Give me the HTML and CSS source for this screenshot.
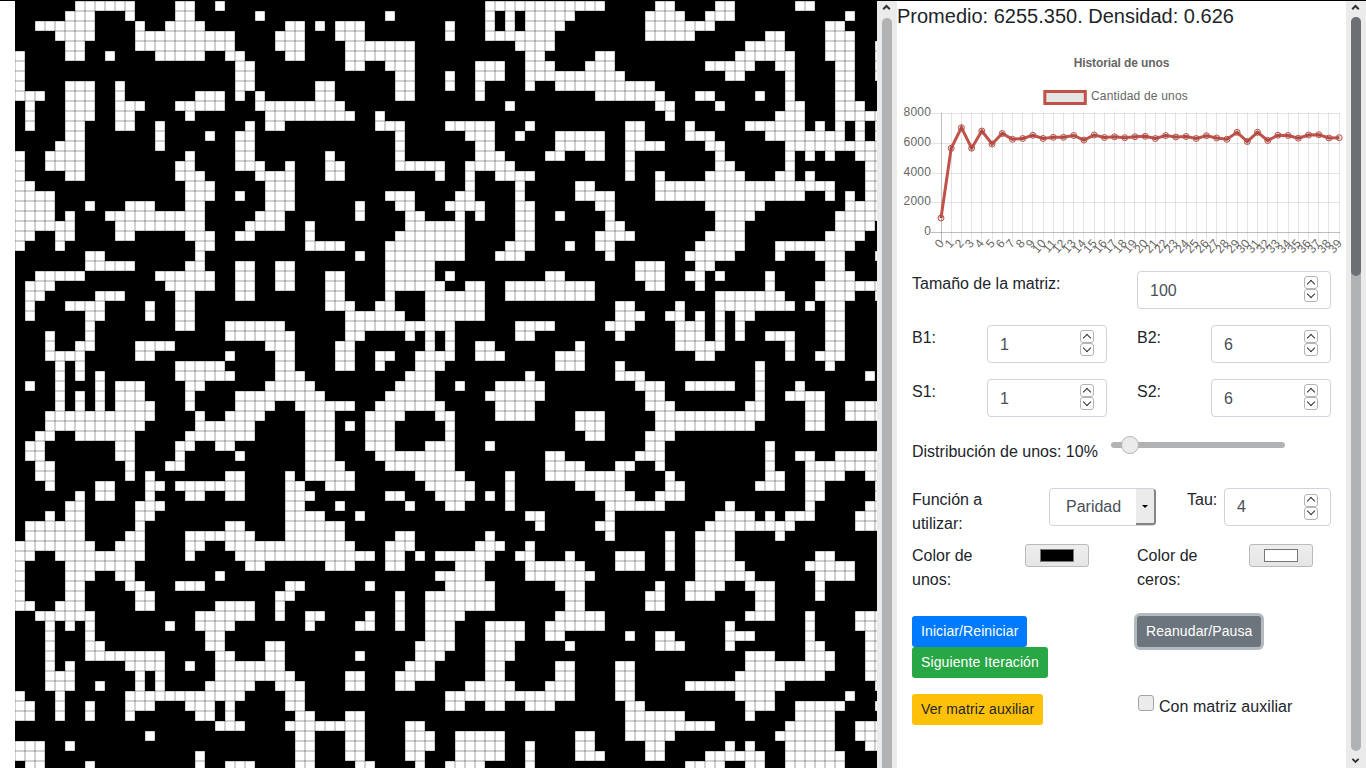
FILE: index.html
```html
<!DOCTYPE html>
<html lang="es">
<head>
<meta charset="utf-8">
<title>Autómata celular</title>
<link rel="stylesheet" href="styles.css">
</head>
<body>
<main class="app">
  <canvas class="matrix" id="matrix" width="862" height="767"></canvas>
  <div class="scroll scroll-left">
    <svg class="scroll-arrow" width="20" height="16" viewBox="0 0 20 16"><path d="M6.2 8.3 9.5 5l3.3 3.3"/></svg>
    <div class="scroll-track"></div>
  </div>
  <section class="panel">
    <h1 class="summary">Promedio: 6255.350. Densidad: 0.626</h1>
    <svg class="chart" id="chart" width="449" height="243" viewBox="897 28 449 243"></svg>
    <form class="controls">
      <div class="row low">
        <label class="half">Tamaño de la matriz:</label>
        <div class="number wide">100<span class="spin"><i></i><i></i></span></div>
      </div>
      <div class="row low">
        <label class="short">B1:</label><div class="number n120">1<span class="spin"><i></i><i></i></span></div>
        <label class="short second">B2:</label><div class="number n120">6<span class="spin"><i></i><i></i></span></div>
      </div>
      <div class="row low">
        <label class="short">S1:</label><div class="number n120">1<span class="spin"><i></i><i></i></span></div>
        <label class="short second">S2:</label><div class="number n120">6<span class="spin"><i></i><i></i></span></div>
      </div>
      <div class="row range-row">
        <label class="range-label">Distribución de unos: 10%</label>
        <div class="range"><span class="range-thumb"></span></div>
      </div>
      <div class="row func-row">
        <label class="func-label">Función a utilizar:</label>
        <div class="select"><span>Paridad</span><b class="select-arrow"></b></div>
        <label class="tau">Tau:</label>
        <div class="number n107">4<span class="spin"><i></i><i></i></span></div>
      </div>
      <div class="row color-row">
        <label class="color-label">Color de unos:</label><div class="color"><span class="swatch black"></span></div>
        <label class="color-label ceros">Color de ceros:</label><div class="color"><span class="swatch white"></span></div>
      </div>
      <div class="row button-row">
        <div class="half stack">
          <button type="button" class="btn primary">Iniciar/Reiniciar</button>
          <button type="button" class="btn success">Siguiente Iteración</button>
        </div>
        <button type="button" class="btn secondary">Reanudar/Pausa</button>
      </div>
      <div class="row">
        <div class="half"><button type="button" class="btn warning">Ver matriz auxiliar</button></div>
        <label class="check"><span class="box"></span>Con matriz auxiliar</label>
      </div>
    </form>
  </section>
  <div class="scroll scroll-right">
    <svg class="scroll-arrow" width="20" height="16" viewBox="0 0 20 16"><path d="M6.2 8.3 9.5 5l3.3 3.3"/></svg>
    <div class="scroll-track"><div class="scroll-thumb"></div></div>
    <svg class="scroll-arrow" width="20" height="17" viewBox="0 0 20 17"><path d="M6.2 7.3 9.5 10.6l3.3-3.3"/></svg>
  </div>
</main>
<script src="app.js"></script>
</body>
</html>
```
FILE: styles.css
```css
* { box-sizing: border-box; }
body {
  margin: 0;
  background: #fff;
  color: #212529;
  font: 16px/24px "Liberation Sans", Arial, sans-serif;
  overflow: hidden;
}
.app {
  display: flex;
  height: 768px;
  padding-left: 15px;
  border-top: 1px solid #000;
}
.matrix { flex: none; width: 862px; height: 767px; }
.scroll {
  flex: none;
  display: flex;
  flex-direction: column;
  width: 20px;
  height: 767px;
  background: #ebebeb;
  overflow: hidden;
}
.scroll-arrow { flex: none; display: block; fill: none; stroke: #2e3436; stroke-width: 2; }
.scroll-track {
  flex: 1;
  width: 10px;
  margin: 0 5px;
  border-radius: 5px;
  background: #b0b2b4;
}
.scroll-left .scroll-track { margin-top: 1px; margin-bottom: -10px; }
.scroll-right .scroll-track { margin-bottom: 1px; }
.scroll-right .scroll-arrow:last-child { height: 16px; }
.scroll-thumb { height: 259px; border-radius: 5px; background: #6c7075; }
.panel { flex: none; width: 449px; }
.summary { margin: 3px 0 0; font-size: 20px; font-weight: 400; line-height: 24px; }
.chart { display: block; }
.chart text { font-size: 12px; letter-spacing: .18px; fill: #666; }
.chart .title { font-weight: 700; letter-spacing: -.1px; text-anchor: middle; }
.chart .y-label, .chart .x-label { text-anchor: end; }
.grid { stroke: rgba(0, 0, 0, .1); }
.axis { stroke: rgba(0, 0, 0, .25); }
.series { fill: none; stroke: #c0524a; stroke-width: 3; stroke-linejoin: miter; }
.point { fill: rgba(0, 0, 0, .1); stroke: #c0524a; stroke-width: 1; }
.legend { fill: #e5e5e5; stroke: #c0524a; stroke-width: 3; }
.controls { padding: 0 15px; }
.row { display: flex; align-items: flex-start; margin-bottom: 16px; }
.low label { padding-top: 1px; }
.low .number { padding-top: 2px; }
.low .spin { margin-top: -4px; }
.half { width: 225px; }
.short { width: 75px; }
.second { margin-left: 30px; width: 74px; }
.number {
  display: flex;
  align-items: center;
  justify-content: space-between;
  height: 38px;
  padding: 0 12px;
  border: 1px solid #ced4da;
  border-radius: 4px;
  color: #495057;
}
.wide { width: 194px; }
.n120 { width: 120px; }
.n107 { width: 107px; }
.spin { display: grid; width: 14px; margin-top: -1px; }
.spin i {
  display: grid;
  place-items: center;
  height: 13px;
  border: 1px solid #b4b4b4;
  border-radius: 3px;
}
.spin i::before {
  content: "";
  width: 5px;
  height: 5px;
  margin-top: 2px;
  border: solid #2e3436;
  border-width: 1.5px 0 0 1.5px;
  transform: rotate(45deg);
}
.spin i:last-child::before { margin-top: -4px; transform: rotate(225deg); }
.range-row { height: 55px; margin: 0; padding-top: 6px; }
.range-label { width: 199px; padding-top: 1px; white-space: nowrap; }
.range {
  width: 174px;
  height: 6px;
  margin-top: 3px;
  border-radius: 3px;
  background: #b0b2b4;
}
.range-thumb {
  display: block;
  width: 18px;
  height: 18px;
  margin: -6px 0 0 10px;
  border: 1px solid #b4b4b4;
  border-radius: 50%;
  background: #ebebeb;
}
.func-row { margin-bottom: 8px; }
.func-label { width: 137px; padding-right: 50px; }
.select {
  display: flex;
  justify-content: space-between;
  align-items: center;
  width: 107px;
  height: 38px;
  padding-left: 16px;
  border: 1px solid #ced4da;
  border-radius: 4px;
  color: #495057;
}
.select-arrow {
  display: grid;
  place-items: center;
  width: 20px;
  height: 36px;
  margin-right: -1px;
  border: solid #858585;
  border-width: 0 2px 2px 0;
  border-radius: 0 3px 3px 0;
  background: #ebebeb;
}
.select-arrow::before {
  content: "";
  border: 3px solid transparent;
  border-top-color: #000;
  border-bottom: 0;
}
.tau { width: 37px; margin-left: 31px; }
.color-row { margin-bottom: 24px; }
.color-label { width: 113px; padding-right: 45px; }
.ceros { width: 112px; margin-left: 48px; padding-right: 40px; }
.color {
  display: grid;
  place-items: center;
  width: 64px;
  height: 23px;
  border: 1px solid #bababa;
  border-radius: 3px;
  background: linear-gradient(#eee, #e5e5e5);
}
.swatch { width: 34px; height: 13px; border: 1px solid #777; }
.black { background: #000; }
.white { background: #fff; }
.stack { display: flex; flex-direction: column; align-items: flex-start; }
.btn {
  display: block;
  height: 31px;
  padding: 4px 8px;
  border: 1px solid transparent;
  border-radius: 3px;
  color: #fff;
  font: 14px/21px "Liberation Sans", Arial, sans-serif;
  letter-spacing: .1px;
  white-space: nowrap;
}
.primary { background: #007bff; }
.success { background: #28a745; }
.warning { background: #ffc107; color: #212529; }
.secondary { background: #6c757d; box-shadow: 0 0 0 3px rgba(108, 117, 125, .5); }
.check { display: flex; line-height: 25px; letter-spacing: .05px; }
.box {
  width: 16px;
  height: 16px;
  margin: 1px 5px 0 1px;
  border: 1px solid #a5a5a5;
  border-radius: 3px;
  background: #ebebeb;
}
```
FILE: app.js
```js
// Empty cells of every row, as column ranges inside four blocks of 22 columns.
const rows = `6-11 16-17 20||3-14 20-21|4-5 12-13
5-7 11 16-17|2 15|3 5 7-11 19-21|0 3-5 17
2-7 12 15-18|5-6 8 10-12 21|3 5 7-10 19-21|0-3 15-16
4-7 12-21|4-6 10-12 21|3-9 19-21|0-1 9-10 15-17
5-6 12-21|4-6 11-17|6-9|7-10 15-17 20
0 5-6 9 14-18 21|0 5-6 11-17|7-8 14-15|6-11 15-17 20
0|0-1 11-12 15-17|2-4 7-9 13-15|3-7 10-11 16-17 20
0|0-1 16-17 21|2-4 7-16|5-6 11 16-17 20
0 5-7 10|0-1 8-9 16-17 21|2 7 10-19|11 16-17
0-2 5-7 10 18-20|0 2 8-9 16-17|2 14-20|2-3 8 11 16-17
1 5-7 10-12 16-20|2-10|5 20-21|4 11-12 16-18
1 5-7 10-11 17|3-11 14|21|10-12 16-20
1 5-6 10-11 14|1 3-4 14-16 21|0-3 7 17-18|1 7-12 14 16 18 20
5-6 14 19|0-1 16|1-3 6 10-14 17-18|1-3 9-16 18 20
4-6 14|0-1 16|2-3 10-14 17-20|3-4 11-20
0 3-6 17|0-1 9 16|2-4 9-10 13-14 17|4 11 13 15 18-20
0 3-6 16-17|0-2 5 9-10 16-20|1-5 17|4-5 11 19-20
0 5-6 16-18|2-5 9-10 20|1 4-7 17 20|3-6 10-11 13 19-20
0-1 17-19|3-5|1 6 12-13 20-21|0-15 19-20
0-3 17-19|0 3-5 15-17|0-1 6 12-15 20-21|0-12 15 17 19-20
0-3 7 11-13 17-18|3-5 12 16-17 21|0-2 6-7 14-15|3-8 17-20
0-3 5 9-18|2-4 12 17-18|0 2 6-7 10 15|4-7 16-20
0-5 10-18|1-4 7 17-21|0 6-7 15-16|4-6 16-19
0-1 4-5 10-11 17-19|0-1 7 16-21|0 6-7 14-17|3-6 15-18
0 4 18-19|7-10 15-21|0 5-7 11 14-15|2-6 10-17
7-8 18|12 15-21|0 4-6 15|1-5 10 14-16 20
7-11 17-18|0-1 4-5 15-19|18-20|2-3 15-16
2-6 14-19|0-1 4-5 9-10 15-19 21|9-10 18-20|1-2 4 9 15-17
1-3 15-19|0-1 4-5 9-10 15-20|1-2 5-13 19-20|2 9 14-20
1-2 8-10 16-17|0-1 9-10 15 19-21|0-2 5-13|4-10 14-17 20
1 5-8 13 16-17|9-11 14-15 19-21|0-2 16-17|0 4-11 13 15-16
1 7-8 13 16-17|11-16 19-21|0-2 16-18 21|0 2 4 6-7 15-16
7 16-17 21|0-4 11-21|6-9 15-17|0-2 4 6 15-16
3 7 21|0-5 11-12 17 19 21|6-7 16|0-2 4 6 9-11 15-16
3 6-7 12-15|3-5 10-11 19 21|2-3 12|0-4 11 15-16
3-6 12-13 21|4-5 10-11 14-15 18-21|2-4 10-12|2-3 11 14-16
4 6 16-20|4-5 10-11 14 18-20|10-12 16|8 15
4 6 8 16-21|4-6 17-19|7 16-18|8 19
1 4 8 10-12 17-18|3-7 16-19|0 4-8 18-20|1-5 8 12
4 6 8 10-12 17|0-8 15-19|3-8 19-20|8 11-14
4 6 8 10-13 17|0-3 6-11 14-20|4-7 19-21|7-8 13-14 17-20
3-13 18 21|0-2 7-9 13-16 20-21|4-7 12-14 20-21|0-8 13-14 17-20
3-12 18-21|0-1 7-9 11 13-15 21|12-14 20-21|0-7 13-14
2-3 6-11 17-21|0-1 7-9 13-15 21|13-14 19-21|
1-2 10-11 16-17 20-21|7-9 13-15 19-21|3 19-20|9
1-2 10-11 16|0 7-9 14-21|9-10 18-20|9 12-13 16-20
2-3 11 15-16|7-10 15-21|9-12 16-17 20|9 13-20
2-3 11 13 21|0 5 7-11 18-21|0 5 9-16 21|9-10 13-16 19-20
3 8-9 13-14 16-21|0 5-6 9-11 19-21|0-1 5 12-16 21|0 8-10 13-14 20
6 8-9 13 17-18 21|0 5-7 15-16 20-21|0-1 3 5 14-17 20-21|0 13-14 20
5-6 12-14|5-6 10 17 21|0 5 15-20|5 13 19-20
3 5-6 12-13|5-8 12|7-8 15|4-7 9 11-13 18-20
1-6 12 21|0 5-10|8 14-15|3-11 18-20
1-6 11-12 17-21|0-1 5-10 16-17|3 15 21|2-5 10
0-7 10-12 17-18 21|0-11 15-17|2-4 7 21|2-5
0-1 4-12 17|0-13 15-16 18 20-21|0-3 6-7 11 16-18 21|2-5 14-15
0 5-11|1-2 9-11 15-16|0-2 7-12 16-18 21|2-6 13-17
0 5-7 10-11 20|20-21|0-2 7-13|2-7 14-17
0 5-6 11-12 16-18|5-6 13 21|0-3 10-12 20|1-4 7-9 14
0 5-6 12-13|4-5 16 19-21|0-3 11-12 19-20|1-3 8-9 14
0-1 4-6 12-13 20-21|0-1 4 16 19-21|0-3 11-12 19-20|8-9
2-7 18-21|0-1 4 7-8 13 16 19-21|0 10-14|7-9 13 18-20
3 5 7 15 18-21|7 12-13 16 19-21|3-6 9-14|5 13 18-20
3 7 19-20|19-21|3-6 9-10 17 20-21|5-7 13 19-20
3 7-8 19-20|3-4 18-21|3-5 11 20-21|0 5 13-14 19-20
3 7-14 20-21|3-4 12 18-20|3-5|7-9 13-15 19-20
3 5 11-14 17 20-21|0-4 17-19|3-4 10-11 16-17|7-15 19-20
3-5 12 14 20-21|0-5 11-12 16-19|3-4 10-11 16-17|6-14 19-20
3-5 8 12 14 19-21|0-1 4-6 11-12 16-17|1-5 9-11 16-17|1-10 20
0 4 11-21|0 5-6 21|0-11 16-17|6-9 17
0-1 4 7 11-13 17-19 21|5-6 21|0 3-4 7-9 17-18|7-9 12-16 20
0-1 4 7 11 18-19 21|6-7 11-12|17-21|0 7 12-15
20-21|0 5-12 17-18|17-21|0-3 11-15 18-20
13|6-7 11-12 17-19|0-4 12-13 17-21|10-15 18-20
0-2 5|6-7 11-12 17-19|0-4 7 12-13 19-20|5 7 11-15 19-20
0-2 18|6-7 11-12 17-18|0-4 7 12-14 19-20|3-8 11-16
1-2 7 18 21|0-1 6-7 12-13 18 21|0-2 7|1-4 7-8 11-16`.split("\n");

const CELL = 10;
const ctx = document.getElementById("matrix").getContext("2d");
ctx.fillStyle = "#000";
ctx.fillRect(0, 0, 862, 767);
ctx.fillStyle = "#fff";
rows.forEach((row, y) => row.split("|").forEach((block, b) => {
  block.split(" ").filter(Boolean).forEach(run => {
    const [from, to = from] = run.split("-").map(Number);
    ctx.fillRect((b * 22 + from) * CELL, y * CELL, (to - from + 1) * CELL, CELL);
  });
}));
ctx.fillStyle = "rgba(0,0,0,.18)";
for (let x = 0; x <= 87; x++) ctx.fillRect(x * CELL - 1, 0, 2, 767);
for (let y = 0; y <= 77; y++) ctx.fillRect(0, y * CELL - 1, 862, 2);

// History chart
const ys = [218, 148.3, 127.7, 148.2, 131, 144, 133.5, 139.3, 138.5, 135.3, 138.5, 137.3, 137.3, 135.5, 140, 135, 137.5, 136.8, 137.7, 136.7, 136.3, 138.5, 135.6, 137, 136.5, 138.5, 135.7, 138, 139.3, 132.3, 141.5, 132.3, 140.5, 135.2, 135.5, 138.2, 135, 134.7, 138, 137.7];
const px = i => 941 + i * 10.21;
let out = '<text class="title" x="1121.5" y="67">Historial de unos</text>' +
  '<rect class="legend" x="1044.8" y="91.5" width="40.5" height="12"/>' +
  '<text x="1091" y="100">Cantidad de unos</text>';
[8000, 6000, 4000, 2000, 0].forEach((v, i) => {
  const y = [113.5, 143.5, 173.5, 202.5, 232.5][i];
  out += `<path class="${v ? "grid" : "axis"}" d="M931 ${y}H1340"/><text class="y-label" x="931" y="${y + 2.5}">${v}</text>`;
});
ys.forEach((_, i) => {
  const x = Math.floor(px(i)) + .5;
  out += `<path class="${i ? "grid" : "axis"}" d="M${x} 113V243"/>` +
    `<text class="x-label" transform="translate(${x} 241) rotate(-50)" y="4">${i}</text>`;
});
out += `<polyline class="series" points="${ys.map((y, i) => px(i) + "," + y).join(" ")}"/>`;
ys.forEach((y, i) => { out += `<circle class="point" cx="${px(i)}" cy="${y}" r="3"/>`; });
document.getElementById("chart").innerHTML = out;
```
